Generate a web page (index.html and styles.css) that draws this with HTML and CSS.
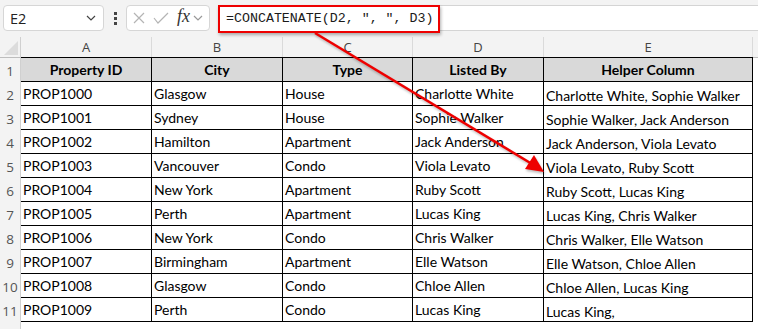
FILE: index.html
```html
<!DOCTYPE html>
<html lang="en">
<head>
    <meta charset="UTF-8">
    <title>Helper Column - CONCATENATE</title>
    <link rel="stylesheet" href="styles.css">
</head>
<body>
    <div class="toolbar">
        <div class="name-box">
            <span>E2</span>
            <svg class="chevron" width="10" height="6" viewBox="0 0 10 6"><polyline points="1,1 5,5 9,1" fill="none" stroke="#444" stroke-width="1.2"/></svg>
        </div>
        <div class="dots"><i></i><i></i><i></i></div>
        <div class="func-box">
            <svg width="12" height="12" viewBox="0 0 12 12"><path d="M1 1 L11 11 M11 1 L1 11" stroke="#b4b4b4" stroke-width="1.2"/></svg>
            <svg width="16" height="12" viewBox="0 0 16 12"><polyline points="1,6 5,11 15,1" fill="none" stroke="#b4b4b4" stroke-width="1.2"/></svg>
            <span class="fx">fx</span>
            <svg width="10" height="6" viewBox="0 0 10 6"><polyline points="1,1 5,5 9,1" fill="none" stroke="#999" stroke-width="1.2"/></svg>
        </div>
        <div class="formula-bar">
            <span class="formula">=CONCATENATE(D2, ", ", D3)</span>
        </div>
    </div>

    <div class="sheet">
        <div class="corner"><svg width="14" height="14" viewBox="0 0 14 14"><polygon points="14,0 14,14 0,14" fill="#dcdcdc"/></svg></div>
        <div class="col-head">A</div>
        <div class="col-head">B</div>
        <div class="col-head">C</div>
        <div class="col-head">D</div>
        <div class="col-head">E</div>
        <div class="col-head filler"></div>

        <div class="row-head first">1</div>
        <div class="cell th first">Property ID</div>
        <div class="cell th first">City</div>
        <div class="cell th first">Type</div>
        <div class="cell th first">Listed By</div>
        <div class="cell th first">Helper Column</div>
        <div class="blank first"></div>

        <div class="row-head">2</div>
        <div class="cell">PROP1000</div><div class="cell">Glasgow</div><div class="cell">House</div><div class="cell">Charlotte White</div>
        <div class="cell helper">Charlotte White, Sophie Walker</div><div class="blank"></div>

        <div class="row-head">3</div>
        <div class="cell">PROP1001</div><div class="cell">Sydney</div><div class="cell">House</div><div class="cell">Sophie Walker</div>
        <div class="cell helper">Sophie Walker, Jack Anderson</div><div class="blank"></div>

        <div class="row-head">4</div>
        <div class="cell">PROP1002</div><div class="cell">Hamilton</div><div class="cell">Apartment</div><div class="cell">Jack Anderson</div>
        <div class="cell helper">Jack Anderson, Viola Levato</div><div class="blank"></div>

        <div class="row-head">5</div>
        <div class="cell">PROP1003</div><div class="cell">Vancouver</div><div class="cell">Condo</div><div class="cell">Viola Levato</div>
        <div class="cell helper">Viola Levato, Ruby Scott</div><div class="blank"></div>

        <div class="row-head">6</div>
        <div class="cell">PROP1004</div><div class="cell">New York</div><div class="cell">Apartment</div><div class="cell">Ruby Scott</div>
        <div class="cell helper">Ruby Scott, Lucas King</div><div class="blank"></div>

        <div class="row-head">7</div>
        <div class="cell">PROP1005</div><div class="cell">Perth</div><div class="cell">Apartment</div><div class="cell">Lucas King</div>
        <div class="cell helper">Lucas King, Chris Walker</div><div class="blank"></div>

        <div class="row-head">8</div>
        <div class="cell">PROP1006</div><div class="cell">New York</div><div class="cell">Condo</div><div class="cell">Chris Walker</div>
        <div class="cell helper">Chris Walker, Elle Watson</div><div class="blank"></div>

        <div class="row-head">9</div>
        <div class="cell">PROP1007</div><div class="cell">Birmingham</div><div class="cell">Apartment</div><div class="cell">Elle Watson</div>
        <div class="cell helper">Elle Watson, Chloe Allen</div><div class="blank"></div>

        <div class="row-head">10</div>
        <div class="cell">PROP1008</div><div class="cell">Glasgow</div><div class="cell">Condo</div><div class="cell">Chloe Allen</div>
        <div class="cell helper">Chloe Allen, Lucas King</div><div class="blank"></div>

        <div class="row-head">11</div>
        <div class="cell">PROP1009</div><div class="cell">Perth</div><div class="cell">Condo</div><div class="cell">Lucas King</div>
        <div class="cell helper">Lucas King,</div><div class="blank"></div>

        <div class="row-head"></div>
        <div class="blank"></div><div class="blank"></div><div class="blank"></div><div class="blank"></div><div class="blank"></div><div class="blank"></div>
    </div>

    <!-- annotation arrow from the formula to E5 -->
    <svg class="arrow" width="758" height="329" viewBox="0 0 758 329">
        <line x1="315" y1="33" x2="532" y2="164" stroke="#ee0000" stroke-width="2.6"/>
        <polygon points="544,172 525,169 534,155" fill="#ee0000"/>
    </svg>
</body>
</html>
```

FILE: styles.css
```css
* {
    box-sizing: border-box;
    margin: 0;
    padding: 0;
}

body {
    width: 758px;
    height: 329px;
    overflow: hidden;
    background: #f3f3f3;
    font-family: Lato, "Liberation Sans", sans-serif;
    color: #000;
    position: relative;
}

/* formula bar */
.toolbar {
    height: 37px;
    display: flex;
    align-items: flex-start;
    padding: 5px 0 0 3px;
}

.name-box {
    width: 101px;
    height: 26px;
    background: #fff;
    border: 1px solid #d6d6d6;
    border-radius: 4px;
    display: flex;
    align-items: center;
    justify-content: space-between;
    padding: 0 7px 0 6px;
    font-family: "Open Sans", sans-serif;
    font-size: 14.5px;
    color: #222;
}

.dots {
    width: 22px;
    height: 26px;
    display: flex;
    flex-direction: column;
    align-items: center;
    justify-content: center;
    gap: 2px;
}

.dots i {
    width: 3px;
    height: 3px;
    background: #444;
}

.func-box {
    width: 84px;
    height: 26px;
    background: #fff;
    border: 1px solid #d6d6d6;
    border-radius: 4px;
    display: flex;
    align-items: center;
    gap: 8px;
    padding-left: 6px;
}

.func-box svg:last-child {
    margin-left: -5px;
}

.fx {
    font-family: "Liberation Serif", serif;
    font-style: italic;
    font-size: 18px;
    color: #333;
    margin-top: -3px;
}

.formula-bar {
    flex: 1;
    height: 26px;
    margin-left: 8px;
    background: #fff;
    border-top: 1px solid #d4d4d4;
    border-bottom: 1px solid #d4d4d4;
    position: relative;
}

.formula {
    position: absolute;
    left: 0;
    top: -1px;
    height: 28px;
    padding: 0 5px 0 6px;
    border: 2px solid #ee0000;
    box-shadow: 1px 2px 3px rgba(0, 0, 0, 0.3);
    background: #fff;
    font-family: "Liberation Mono", monospace;
    font-size: 13.3px;
    line-height: 24px;
    color: #1a1a1a;
    white-space: pre;
}

/* sheet grid */
.sheet {
    display: grid;
    grid-template-columns: 21px 131px 131px 130px 131px 209px 1fr;
    grid-template-rows: 20px 25px repeat(10, 24px) 1fr;
    height: 292px;
    background: #fff;
}

.corner {
    background: #f3f3f3;
    border-right: 1px solid #d0d0d0;
    display: flex;
    align-items: flex-end;
    justify-content: flex-end;
    padding: 0 2px 2px 0;
}

.col-head {
    background: #f3f3f3;
    border-right: 1px solid #dadada;
    font-family: "Open Sans", sans-serif;
    font-size: 13px;
    color: #444;
    display: flex;
    align-items: center;
    justify-content: center;
}

.col-head.filler {
    border-right: none;
}

.row-head {
    background: #f3f3f3;
    border-right: 1px solid #d0d0d0;
    font-family: "Open Sans", sans-serif;
    font-size: 13.5px;
    color: #555;
    display: flex;
    align-items: center;
    justify-content: center;
    padding-top: 2px;
}

.row-head.first {
    border-top: 1px solid #bdbdbd;
}

.cell {
    border-right: 1px solid #000;
    border-bottom: 1px solid #000;
    font-size: 14px;
    padding: 0 2px 0 2px;
    display: flex;
    align-items: center;
    white-space: nowrap;
    overflow: hidden;
}

.cell.first {
    border-top: 1px solid #000;
}

.th {
    background: #d9d9d9;
    font-weight: 700;
    justify-content: center;
}

.helper {
    padding-top: 4px;
}

.blank.first {
    border-top: 1px solid #bdbdbd;
}

/* annotation overlay */
.arrow {
    position: absolute;
    left: 0;
    top: 0;
    pointer-events: none;
    filter: drop-shadow(1px 2px 1px rgba(0, 0, 0, 0.25));
}
```
